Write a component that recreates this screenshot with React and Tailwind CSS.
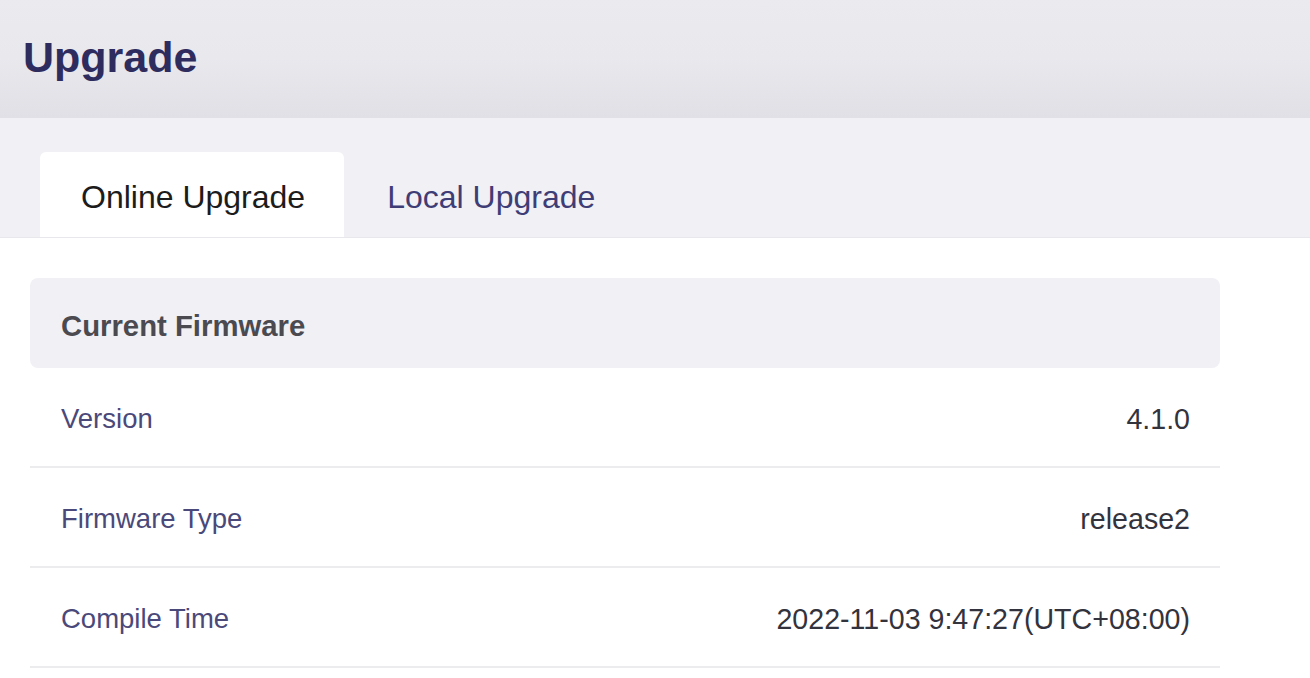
import React from "react";

const ROWS = [
  { label: "Version", value: "4.1.0" },
  { label: "Firmware Type", value: "release2" },
  { label: "Compile Time", value: "2022-11-03 9:47:27(UTC+08:00)" },
];

export default function App() {
  return (
    <div className="min-h-screen w-full bg-white font-['Liberation_Sans',Arial,sans-serif]">
      {/* page header */}
      <div className="h-[118px] flex items-center px-[23px] bg-gradient-to-b from-[#ebeaef] via-[#e9e8ed] to-[#e1e0e6]">
        <h1 className="text-[43px] font-bold text-[#2e2c5e] leading-none -mt-[4px]">
          Upgrade
        </h1>
      </div>

      {/* tabs */}
      <div className="h-[120px] bg-[#f1f0f5] flex items-end pl-[40px] border-b border-[#e8e7ec]">
        <button className="h-[85px] pl-[41px] pr-[39px] bg-white rounded-t-[6px] text-[32px] text-[#1c1c1c] leading-none pt-[4px]">
          Online Upgrade
        </button>
        <button className="h-[85px] px-[43px] text-[32px] text-[#3f3d76] leading-none pt-[4px]">
          Local Upgrade
        </button>
      </div>

      {/* firmware card */}
      <div className="w-[1190px] ml-[30px] mt-[40px]">
        <div className="h-[90px] bg-[#f1f0f5] rounded-[8px] flex items-center px-[31px] pt-[5px]">
          <span className="text-[29.3px] font-bold text-[#4a4a50]">
            Current Firmware
          </span>
        </div>
        {ROWS.map((row) => (
          <div
            key={row.label}
            className="h-[100px] flex items-center justify-between pl-[31px] pr-[30px] pt-[4px] border-b-2 border-[#ececee]"
          >
            <span className="text-[27.5px] text-[#4a497a]">{row.label}</span>
            <span className="text-[28.6px] text-[#33333d]">{row.value}</span>
          </div>
        ))}
      </div>
    </div>
  );
}
